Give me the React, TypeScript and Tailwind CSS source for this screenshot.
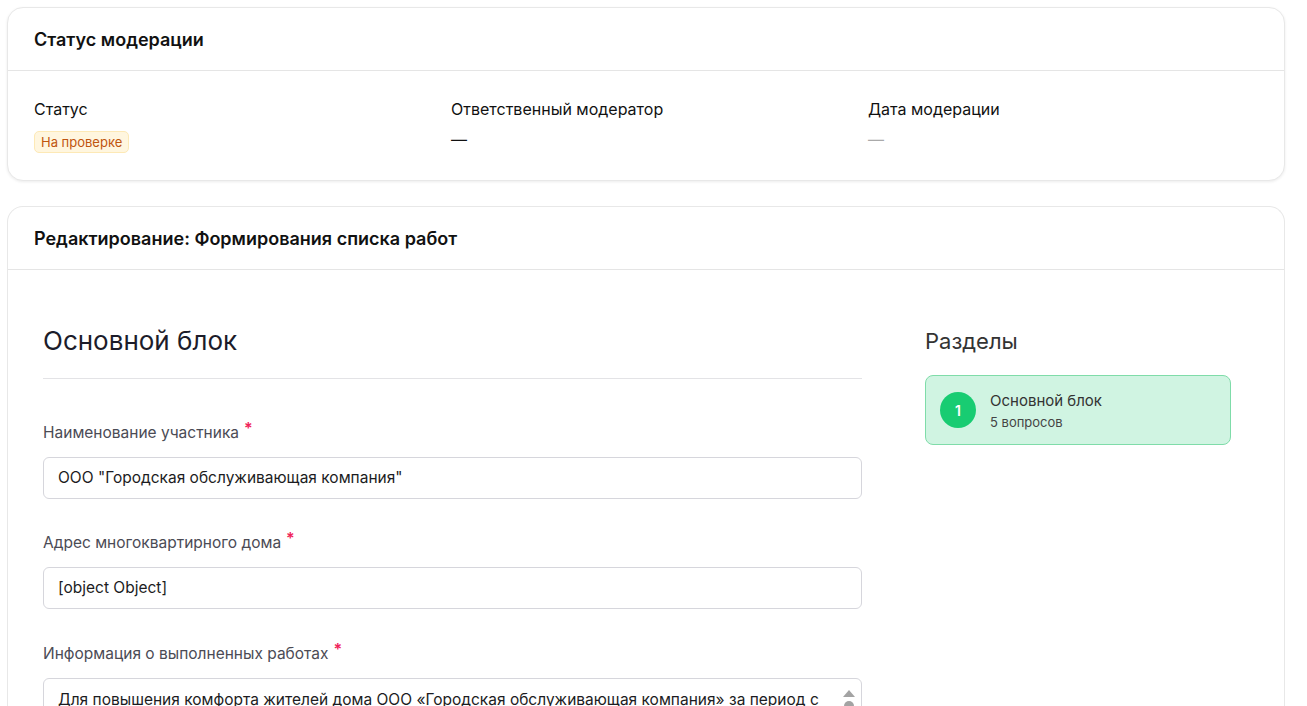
import React from "react";

const Label = ({ text }: { text: string }) => (
  <div className="flex items-start text-[15.5px] leading-5 text-[#4b4b55]">
    <span>{text}</span>
    <span className="ml-[5px] -mt-[5px] text-[#f0245a] text-[16px] font-semibold">*</span>
  </div>
);

const App = () => {
  return (
    <div className="min-h-screen bg-white pt-[7px] pl-[7px] font-['Inter',sans-serif]">
      <div className="w-[1278px] flex flex-col gap-[25px]">
        <div className="rounded-[16px] border border-[#e8e8e8] bg-white shadow-[0_1px_3px_rgba(0,0,0,0.08)]">
          <div className="h-[63px] flex items-center px-[26px] border-b border-[#e5e5e5]">
            <h2 className="text-[18px] font-semibold text-[#111]">Статус модерации</h2>
          </div>
          <div className="grid grid-cols-3 gap-[27px] px-[26px] pt-[28px] pb-[27px]">
            <div>
              <div className="text-[16px] leading-5 text-[#111]">Статус</div>
              <span className="mt-[12px] inline-block rounded-[5px] border border-[#fde9b6] bg-[#fff6df] px-[6px] py-[1px] text-[13px] leading-[18px] text-[#c0550f]">
                На проверке
              </span>
            </div>
            <div>
              <div className="text-[16px] leading-5 text-[#111]">Ответственный модератор</div>
              <div className="mt-[10px] text-[16px] leading-5 text-[#111]">—</div>
            </div>
            <div>
              <div className="text-[16px] leading-5 text-[#111]">Дата модерации</div>
              <div className="mt-[10px] text-[16px] leading-5 text-[#aaa]">—</div>
            </div>
          </div>
        </div>

        <div className="rounded-t-[16px] border border-b-0 border-[#e8e8e8] bg-white h-[520px]">
          <div className="h-[63px] flex items-center px-[26px] border-b border-[#e5e5e5]">
            <h2 className="text-[18px] font-semibold text-[#111]">Редактирование: Формирования списка работ</h2>
          </div>
          <div className="flex gap-[63px] pl-[35px] pt-[55px]">
            <div className="w-[819px]">
              <h1 className="text-[26px] leading-8 text-[#1c1c2a] pb-[21px] border-b border-[#e3e3e6]">Основной блок</h1>
              <div className="mt-[44px] flex flex-col">
                <Label text="Наименование участника" />
                <div className="mt-[14px] h-[42px] rounded-[6px] border border-[#d6d6dc] px-[14px] flex items-center text-[15.5px] text-[#1c1c22]">
                  ООО "Городская обслуживающая компания"
                </div>
                <div className="mt-[34px]">
                  <Label text="Адрес многоквартирного дома" />
                </div>
                <div className="mt-[14px] h-[42px] rounded-[6px] border border-[#d6d6dc] px-[14px] flex items-center text-[15.5px] text-[#1c1c22]">
                  [object Object]
                </div>
                <div className="mt-[35px]">
                  <Label text="Информация о выполненных работах" />
                </div>
                <div className="mt-[14px] h-[80px] rounded-[6px] border border-[#d6d6dc] pl-[14px] pr-[6px] pt-[9px] flex text-[15.5px] text-[#1c1c22]">
                  <span className="flex-1">Для повышения комфорта жителей дома ООО «Городская обслуживающая компания» за период с</span>
                  <div className="w-[12px] flex flex-col items-center pt-[2px] gap-[4px]">
                    <div className="w-0 h-0 border-l-[6px] border-r-[6px] border-b-[7px] border-l-transparent border-r-transparent border-b-[#a3a3a3]" />
                    <div className="w-[10px] h-[10px] rounded-full bg-[#a3a3a3]" />
                  </div>
                </div>
              </div>
            </div>
            <div className="w-[306px]">
              <h3 className="text-[22px] leading-8 text-[#333]">Разделы</h3>
              <div className="mt-[18px] h-[70px] rounded-[8px] border border-[#7fdca9] bg-[#d0f4e2] flex items-center px-[14px] gap-[14px]">
                <div className="w-9 h-9 rounded-full bg-[#18cc72] flex items-center justify-center text-white text-[14px] font-semibold">1</div>
                <div className="flex flex-col">
                  <span className="text-[15px] leading-5 text-[#333]">Основной блок</span>
                  <span className="mt-[3px] text-[13px] leading-4 text-[#444]">5 вопросов</span>
                </div>
              </div>
            </div>
          </div>
        </div>
      </div>
    </div>
  );
};

export default App;
